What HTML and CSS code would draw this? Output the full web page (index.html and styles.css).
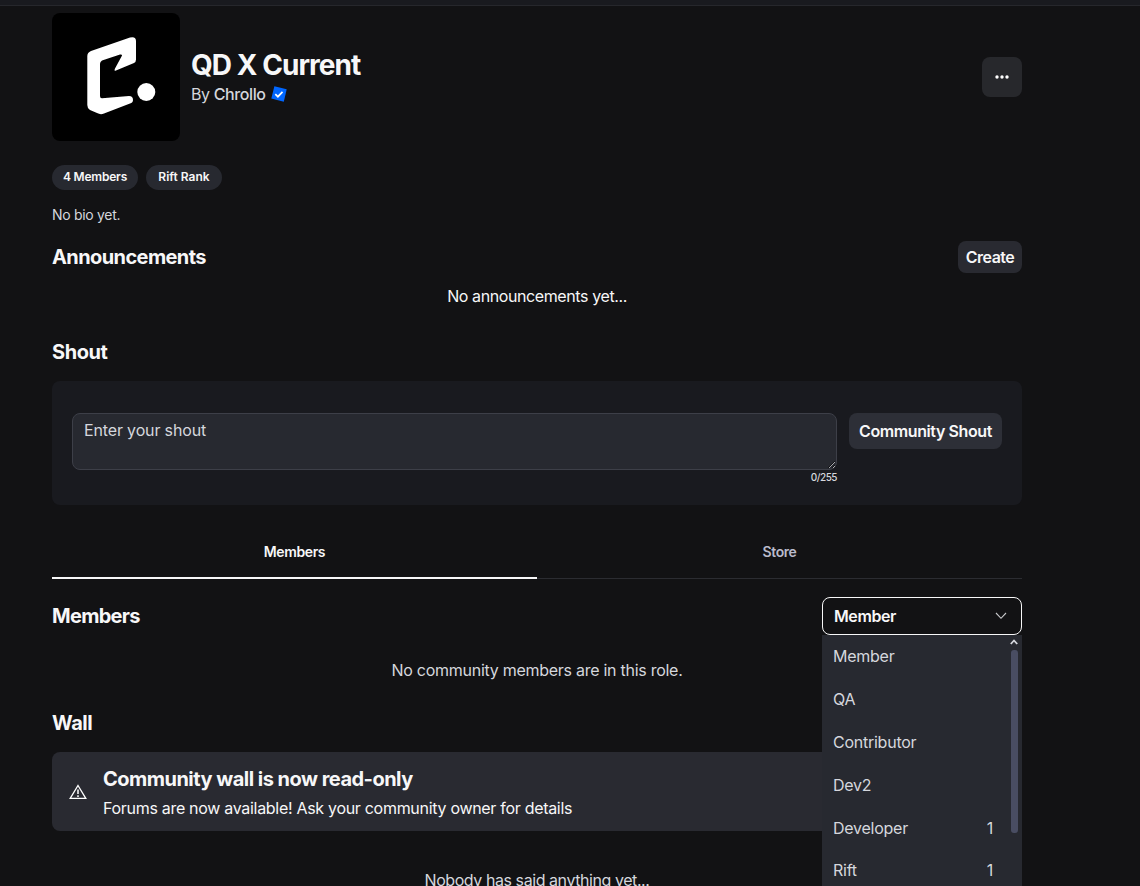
FILE: index.html
```
<!DOCTYPE html>
<html lang="en">
<head>
    <meta charset="UTF-8">
    <meta name="viewport" content="width=device-width, initial-scale=1.0">
    <title>QD X Current</title>
    <link rel="stylesheet" href="styles.css">
</head>
<body>
    <div class="topbar"></div>
    <main class="container">
        <header class="group-header">
            <svg class="avatar" viewBox="0 0 128 128">
                <path d="M35.300 43Q35.300 39.500 39 38L78 24.500Q84 23 84 28V46.500Q84 49 82 50L64 57.500Q61.500 58.500 63 55.500L69.500 43.500Q71 41 68 41.500L50 47.500Q48 48.500 48 51V83Q48 85.300 50 85.200L77 83Q81 83 81 87Q81 89.500 78 90.500L52 100.500Q48.500 102 45 100L38 97Q35.300 95.500 35.300 92Z" fill="#fff"/>
                <circle cx="94.300" cy="79" r="9" fill="#fff"/>
            </svg>
            <div class="group-info">
                <h1>QD X Current</h1>
                <div class="owner">
                    <span class="owner-text">By <b>Chrollo</b></span>
                    <svg class="verified" width="16" height="16" viewBox="0 0 16 16">
                        <path d="M3.400.300 15.700 3.200 12.800 15.700.300 12.600Z" fill="#0066ff"/>
                        <path d="M4.300 8.200 6.900 10.700 11.500 5.800" fill="none" stroke="#fff" stroke-width="1.700"/>
                    </svg>
                </div>
            </div>
            <button class="more" aria-label="More">
                <svg width="14" height="4" viewBox="0 0 14 4" fill="#fff">
                    <circle cx="2" cy="2" r="1.700"/>
                    <circle cx="7" cy="2" r="1.700"/>
                    <circle cx="12" cy="2" r="1.700"/>
                </svg>
            </button>
        </header>

        <div class="pills">
            <span class="pill pill-members">4 Members</span>
            <span class="pill pill-rank">Rift Rank</span>
        </div>
        <p class="bio">No bio yet.</p>

        <section class="announcements">
            <div class="section-head">
                <h2>Announcements</h2>
                <button class="btn btn-create">Create</button>
            </div>
            <p class="empty empty-announcements">No announcements yet...</p>
        </section>

        <section class="shout">
            <h2>Shout</h2>
            <div class="shout-box">
                <div class="shout-field">
                    <textarea placeholder="Enter your shout"></textarea>
                    <span class="counter">0/255</span>
                </div>
                <button class="btn btn-shout">Community Shout</button>
            </div>
        </section>

        <nav class="tabs">
            <a class="tab active">Members</a>
            <a class="tab">Store</a>
        </nav>

        <section class="members">
            <div class="section-head">
                <h2>Members</h2>
                <div class="role-select">
                    <button class="role-current">
                        <span>Member</span>
                        <svg width="12" height="8" viewBox="0 0 12 8" fill="none" stroke="#c8c9cc" stroke-width="1.100">
                            <path d="M1 1 6 6.300 11 1"/>
                        </svg>
                    </button>
                    <div class="role-menu">
                        <ul>
                            <li><span>Member</span></li>
                            <li><span>QA</span></li>
                            <li><span>Contributor</span></li>
                            <li><span>Dev2</span></li>
                            <li><span>Developer</span><span>1</span></li>
                            <li><span>Rift</span><span>1</span></li>
                        </ul>
                        <div class="scrollbar">
                            <svg width="8" height="6" viewBox="0 0 8 6" fill="none" stroke="#d5d7dd" stroke-width="1.800">
                                <path d="M.800 5 4 1.500 7.200 5"/>
                            </svg>
                            <div class="thumb"></div>
                        </div>
                    </div>
                </div>
            </div>
            <p class="empty empty-members">No community members are in this role.</p>
        </section>

        <section class="wall">
            <h2>Wall</h2>
            <div class="banner">
                <svg width="18" height="16" viewBox="0 0 18 16" fill="none" stroke="#fff">
                    <path d="M9 1.500 16.800 14.400H1.200Z" stroke-width="1.300"/>
                    <path d="M9 5.500V10M9 11.200V13" stroke-width="1.500"/>
                </svg>
                <div class="banner-text">
                    <h3>Community wall is now read-only</h3>
                    <p>Forums are now available! Ask your community owner for details</p>
                </div>
            </div>
            <p class="empty empty-wall">Nobody has said anything yet...</p>
        </section>
    </main>
</body>
</html>
```
FILE: styles.css
```
* {
    box-sizing: border-box;
}
body {
    font-family: Inter, "Open Sans", sans-serif;
    font-size: 16px;
    margin: 0;
    height: 886px;
    overflow: hidden;
    background-color: #121214;
    color: #f7f7f8;
}
h1, h2, h3, p, ul {
    margin: 0;
    padding: 0;
}
button {
    font-family: inherit;
    border: 0;
    padding: 0;
    color: #f7f7f8;
}
svg {
    display: block;
}
.topbar {
    height: 6px;
    background-color: #191a1f;
    border-bottom: 1px solid #26272c;
}
.container {
    width: 970px;
    margin-left: 52px;
    padding-top: 7px;
}
.group-header {
    display: flex;
    align-items: center;
    height: 128px;
}
.avatar {
    width: 128px;
    height: 128px;
    background-color: #000;
    border-radius: 8px;
}
.group-info {
    flex: 1;
    padding-left: 11px;
}
h1 {
    font-size: 28px;
    line-height: 34px;
    font-weight: 700;
    letter-spacing: -0.95px;
}
.owner {
    display: flex;
    align-items: center;
    gap: 5px;
    line-height: 24px;
    color: #d5d7dd;
    letter-spacing: -0.4px;
}
.owner b {
    font-weight: 500;
}
.more {
    display: flex;
    align-items: center;
    justify-content: center;
    width: 40px;
    height: 40px;
    border-radius: 8px;
    background-color: #27282c;
}
.pills {
    display: flex;
    gap: 8px;
    margin-top: 24px;
}
.pill {
    height: 25px;
    line-height: 24px;
    border-radius: 13px;
    background-color: #272930;
    font-size: 12px;
    font-weight: 600;
    text-align: center;
    letter-spacing: -0.2px;
}
.pill-members {
    width: 86px;
}
.pill-rank {
    width: 76px;
    letter-spacing: 0;
}
.bio {
    margin-top: 15px;
    font-size: 14px;
    line-height: 20px;
    color: #d5d7dd;
    letter-spacing: -0.3px;
}
.section-head {
    display: flex;
    align-items: center;
    justify-content: space-between;
}
h2 {
    font-size: 20px;
    line-height: 24px;
    font-weight: 700;
    letter-spacing: -0.6px;
}
.announcements {
    margin-top: 16px;
}
.shout h2, .wall h2 {
    letter-spacing: -0.45px;
}
.btn {
    border-radius: 8px;
    background-color: #292a31;
    font-size: 16px;
    font-weight: 600;
    letter-spacing: -0.5px;
}
.btn-create {
    width: 64px;
    height: 32px;
}
.empty {
    line-height: 24px;
    text-align: center;
    color: #d5d7dd;
}
.empty-announcements {
    margin-top: 11px;
    color: #f7f7f8;
    letter-spacing: -0.4px;
}
.shout {
    margin-top: 32px;
}
.shout-box {
    display: flex;
    align-items: flex-start;
    gap: 12px;
    height: 124px;
    margin-top: 17px;
    padding: 32px 20px 0;
    border-radius: 8px;
    background-color: #191a1f;
}
.shout-field {
    flex: 1;
    display: flex;
    flex-direction: column;
}
textarea {
    height: 57px;
    padding: 6px 11px;
    border: 1px solid #3d3f48;
    border-radius: 8px;
    background-color: #272930;
    color: #f7f7f8;
    font-family: inherit;
    font-size: 16px;
    line-height: 20px;
    letter-spacing: -0.15px;
    resize: vertical;
    color-scheme: dark;
}
textarea::placeholder {
    color: #d5d7dd;
}
.counter {
    align-self: flex-end;
    font-size: 10px;
    line-height: 15px;
    font-weight: 500;
    color: #d5d7dd;
    letter-spacing: -0.5px;
}
.btn-shout {
    width: 153px;
    height: 36px;
    background-color: #2d2f37;
    letter-spacing: -0.4px;
}
.tabs {
    display: flex;
    height: 54px;
    margin-top: 20px;
}
.tab {
    flex: 1;
    height: 54px;
    padding-top: 17px;
    border-bottom: 1px solid #2b2c31;
    font-size: 14px;
    line-height: 20px;
    font-weight: 600;
    text-align: center;
    color: #babbcb;
    letter-spacing: -0.4px;
}
.tab.active {
    border-bottom: 2px solid #f7f7f8;
    color: #f7f7f8;
}
.members {
    margin-top: 18px;
}
.members h2 {
    letter-spacing: -0.7px;
}
.role-select {
    position: relative;
    width: 200px;
}
.role-current {
    display: flex;
    align-items: center;
    justify-content: space-between;
    width: 200px;
    height: 38px;
    padding: 0 14px 0 11px;
    border: 1px solid #f7f7f8;
    border-radius: 8px;
    background-color: #121214;
    font-size: 16px;
    font-weight: 600;
    letter-spacing: -0.4px;
}
.role-menu {
    position: absolute;
    top: 38px;
    left: 0;
    display: flex;
    justify-content: space-between;
    width: 200px;
    height: 260px;
    background-color: #272930;
}
.role-menu ul {
    width: 185px;
    list-style: none;
}
.role-menu li {
    display: flex;
    justify-content: space-between;
    height: 43px;
    padding: 0 13px 0 11px;
    line-height: 43px;
    color: #d5d7dd;
    letter-spacing: -0.25px;
}
.role-menu li:last-child {
    line-height: 41px;
}
.scrollbar {
    display: flex;
    flex-direction: column;
    align-items: center;
    gap: 5px;
    width: 16px;
    padding-top: 4px;
}
.thumb {
    width: 7px;
    height: 183px;
    border-radius: 3px;
    background-color: #494d62;
}
.empty-members {
    margin-top: 23px;
    letter-spacing: -0.27px;
}
.wall {
    margin-top: 29px;
}
.banner {
    display: flex;
    align-items: center;
    gap: 16px;
    height: 79px;
    margin-top: 17px;
    padding: 0 17px;
    border-radius: 8px;
    background-color: #292a31;
}
.banner-text {
    padding-top: 2px;
}
h3 {
    font-size: 20px;
    line-height: 30px;
    font-weight: 700;
    letter-spacing: -0.52px;
}
.banner p {
    line-height: 28px;
    letter-spacing: -0.3px;
}
.empty-wall {
    margin-top: 37px;
    letter-spacing: -0.43px;
}
```
